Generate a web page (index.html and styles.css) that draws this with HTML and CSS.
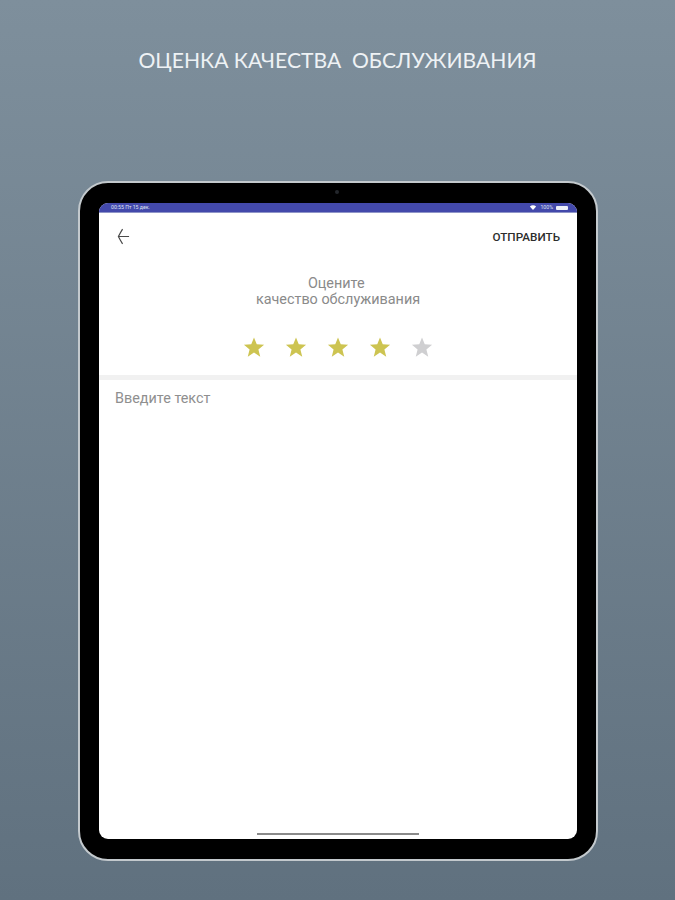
FILE: index.html
```html
<!DOCTYPE html>
<html lang="ru">
<head>
<meta charset="utf-8">
<title>Оценка качества обслуживания</title>
<link rel="stylesheet" href="styles.css">
</head>
<body>
<main class="page">
  <h1 class="headline">ОЦЕНКА КАЧЕСТВА &nbsp;ОБСЛУЖИВАНИЯ</h1>
  <div class="tablet">
    <span class="camera"></span>
    <div class="screen">
      <div class="status">
        <span class="time">00:55 Пт 15 дек.</span>
        <span class="status-right">
          <svg class="wifi" viewBox="0 0 10 8"><path d="M0 2.500 C3 -.5 7 -.5 10 2.500 L5 8 Z" fill="#fff"/></svg>
          <span class="pct">100%</span>
          <span class="battery"></span>
        </span>
      </div>
      <header class="toolbar">
        <svg class="back" viewBox="0 0 14 18"><path d="M13 9 H2 M6 1 Q3.500 5 1.500 9 Q3.500 13 6 17" fill="none" stroke="#4a4a4a" stroke-width="1.300"/></svg>
        <span class="send">ОТПРАВИТЬ</span>
      </header>
      <p class="prompt">Оцените&nbsp;<br>качество обслуживания</p>
      <div class="stars">
        <svg class="star on" viewBox="0 0 24 24"><path d="M12 1.500 L15 9 L23 9.500 L16.800 14.600 L18.800 22.500 L12 18.100 L5.200 22.500 L7.200 14.600 L1 9.500 L9 9 Z"/></svg>
        <svg class="star on" viewBox="0 0 24 24"><path d="M12 1.500 L15 9 L23 9.500 L16.800 14.600 L18.800 22.500 L12 18.100 L5.200 22.500 L7.200 14.600 L1 9.500 L9 9 Z"/></svg>
        <svg class="star on" viewBox="0 0 24 24"><path d="M12 1.500 L15 9 L23 9.500 L16.800 14.600 L18.800 22.500 L12 18.100 L5.200 22.500 L7.200 14.600 L1 9.500 L9 9 Z"/></svg>
        <svg class="star on" viewBox="0 0 24 24"><path d="M12 1.500 L15 9 L23 9.500 L16.800 14.600 L18.800 22.500 L12 18.100 L5.200 22.500 L7.200 14.600 L1 9.500 L9 9 Z"/></svg>
        <svg class="star" viewBox="0 0 24 24"><path d="M12 1.500 L15 9 L23 9.500 L16.800 14.600 L18.800 22.500 L12 18.100 L5.200 22.500 L7.200 14.600 L1 9.500 L9 9 Z"/></svg>
      </div>
      <div class="divider"></div>
      <p class="field">Введите текст</p>
      <div class="home"></div>
    </div>
  </div>
</main>
</body>
</html>
```
FILE: styles.css
```css
* { box-sizing: border-box; }
html, body { margin: 0; height: 100%; }
body { overflow: hidden; }
.page {
  width: 675px;
  height: 900px;
  background: linear-gradient(180deg, #7e8f9c 0%, #60717f 100%);
  padding-top: 46px;
  display: flex;
  flex-direction: column;
  align-items: center;
}
.headline {
  margin: 0;
  height: 28px;
  font: 400 21.100px/28px Lato, sans-serif;
  color: #eef2f5;
  white-space: nowrap;
}
.tablet {
  position: relative;
  margin-top: 107px;
  width: 520px;
  height: 680px;
  margin-left: 1px;
  padding: 20px 19px;
  background: #000;
  border: 2px solid #c3c9cd;
  border-radius: 30px;
}
.camera {
  position: absolute;
  top: 7px;
  left: 255px;
  width: 4px;
  height: 4px;
  border-radius: 50%;
  background: #23262b;
}
.screen {
  position: relative;
  height: 636px;
  width: 478px;
  background: #fff;
  border-radius: 9px;
  overflow: hidden;
  display: flex;
  flex-direction: column;
}
.status {
  flex: none;
  height: 10px;
  background: #4349ab;
  border-bottom: 1px solid #8f95c8;
  padding: 0 9px 0 12px;
  display: flex;
  justify-content: space-between;
  align-items: center;
  color: #dfe2f2;
  font: 400 5.200px/9px Roboto, sans-serif;
}
.status-right { display: flex; align-items: center; gap: 3px; }
.wifi { width: 8px; height: 5px; }
.battery { width: 12px; height: 4px; background: #eef0fa; border-radius: 1px; }
.toolbar {
  flex: none;
  height: 47px;
  padding: 0 17px 0 18px;
  display: flex;
  justify-content: space-between;
  align-items: center;
}
.back { width: 13px; height: 17px; }
.send {
  font: 500 11.700px/14px Roboto, sans-serif;
  color: #2d2d2d;
}
.prompt {
  flex: none;
  margin: 16px 0 0;
  text-align: center;
  font: 400 14.400px/16px Roboto, sans-serif;
  color: #8a8a8a;
}
.stars {
  flex: none;
  margin-top: 28px;
  padding-left: 144px;
  display: flex;
  gap: 20px;
}
.star { width: 22px; height: 22px; fill: #cfcfd1; }
.star.on { fill: #cdc451; }
.divider {
  flex: none;
  margin-top: 17px;
  height: 5px;
  background: #f1f1f1;
}
.field {
  flex: none;
  margin: 11px 0 0;
  padding-left: 16px;
  font: 400 14.400px/16px Roboto, sans-serif;
  color: #8f8f8f;
}
.home {
  position: absolute;
  left: 158px;
  bottom: 4px;
  width: 162px;
  height: 2px;
  background: #8a8a8a;
}
```
